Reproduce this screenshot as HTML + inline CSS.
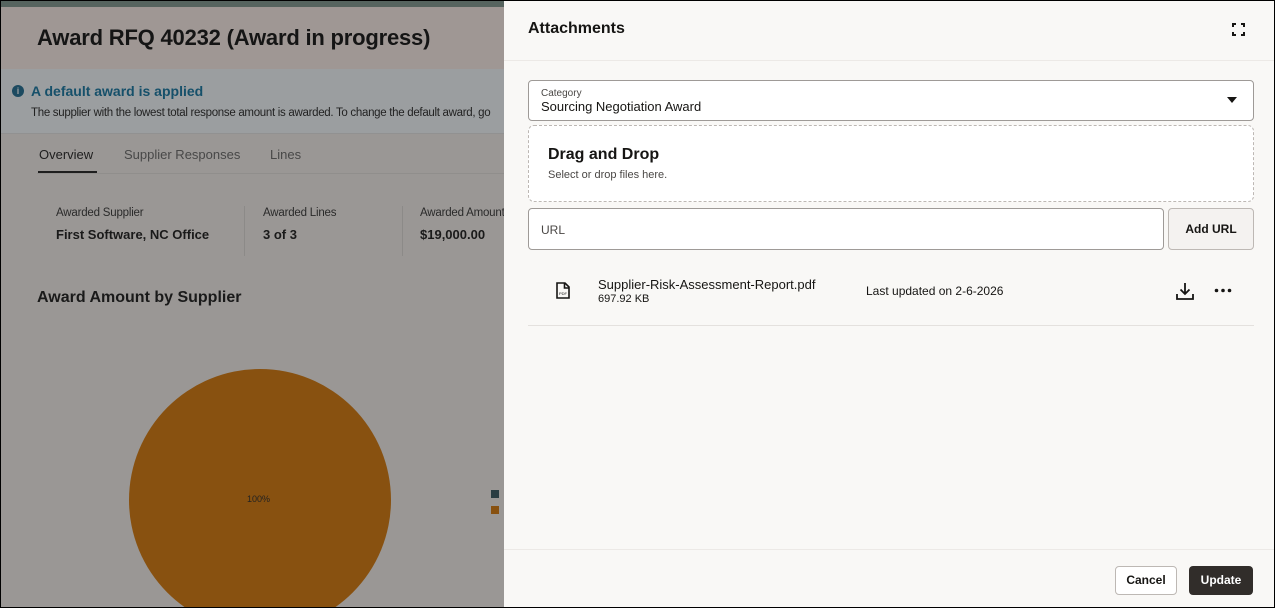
<!DOCTYPE html>
<html><head><meta charset="utf-8"><style>
*{box-sizing:border-box;margin:0;padding:0}
body{width:1275px;height:608px;overflow:hidden;font-family:"Liberation Sans",sans-serif;background:#000;position:relative}
.abs{position:absolute}
#left{left:1px;top:1px;width:503px;height:606px;background:#9a9795;overflow:hidden}
#panel{left:504px;top:1px;width:770px;height:606px;background:#f9f8f6}
.t{position:absolute;white-space:nowrap}
</style></head><body>
<div id="left" class="abs">
  <div class="abs" style="left:0;top:0;width:503px;height:6px;background:#56645f"></div>
  <div class="abs" style="left:0;top:6px;width:503px;height:62px;background:#9f9794"></div>
  <div class="t" style="left:36px;top:24px;font-size:22px;font-weight:bold;color:#151515;letter-spacing:-0.2px">Award RFQ 40232 (Award in progress)</div>
  <div class="abs" style="left:0;top:68px;width:503px;height:65px;background:#9b9ea0;border-bottom:1px solid #919191"></div>
  <div class="abs" style="left:11px;top:84px;width:12px;height:12px;border-radius:50%;background:#1c4a60;color:#9b9ea0;font-size:9px;font-weight:bold;text-align:center;line-height:12px">i</div>
  <div class="t" style="left:30px;top:82px;font-size:14px;font-weight:bold;color:#16506a">A default award is applied</div>
  <div class="t" style="left:30px;top:106px;font-size:11.5px;color:#222;letter-spacing:-0.3px">The supplier with the lowest total response amount is awarded. To change the default award, go</div>
  <div class="t" style="left:38px;top:146px;font-size:13px;color:#1e1e1e">Overview</div>
  <div class="abs" style="left:37px;top:170px;width:59px;height:2px;background:#1e1e1e"></div>
  <div class="t" style="left:123px;top:146px;font-size:13px;color:#484848">Supplier Responses</div>
  <div class="t" style="left:269px;top:146px;font-size:13px;color:#484848">Lines</div>
  <div class="abs" style="left:36px;top:172px;width:467px;height:1px;background:#908e8c"></div>
  <div class="t" style="left:55px;top:206px;font-size:11.5px;color:#2a2a2a;letter-spacing:-0.2px">Awarded Supplier</div>
  <div class="t" style="left:55px;top:226px;font-size:13px;font-weight:bold;color:#1a1a1a">First Software, NC Office</div>
  <div class="abs" style="left:243px;top:205px;width:1px;height:50px;background:#8c8a88"></div>
  <div class="t" style="left:262px;top:206px;font-size:11.5px;color:#2a2a2a;letter-spacing:-0.2px">Awarded Lines</div>
  <div class="t" style="left:262px;top:226px;font-size:13px;font-weight:bold;color:#1a1a1a">3 of 3</div>
  <div class="abs" style="left:401px;top:205px;width:1px;height:50px;background:#8c8a88"></div>
  <div class="t" style="left:419px;top:206px;font-size:11.5px;color:#2a2a2a;letter-spacing:-0.2px">Awarded Amount</div>
  <div class="t" style="left:419px;top:226px;font-size:13px;font-weight:bold;color:#1a1a1a">$19,000.00</div>
  <div class="t" style="left:36px;top:288px;font-size:16px;font-weight:bold;color:#1a1a1a">Award Amount by Supplier</div>
  <div class="abs" style="left:128px;top:368px;width:262px;height:262px;border-radius:50%;background:#885110"></div>
  <div class="t" style="left:246px;top:493px;font-size:9px;color:#222">100%</div>
  <div class="abs" style="left:490px;top:489px;width:8px;height:8px;background:#2a3d42"></div>
  <div class="abs" style="left:490px;top:505px;width:8px;height:8px;background:#885110"></div>
</div>
<div id="panel" class="abs">
  <div class="t" style="left:24px;top:19px;font-size:16px;font-weight:bold;color:#161513">Attachments</div>
  <svg class="abs" style="left:728px;top:22px" width="13" height="13" viewBox="0 0 13 13" fill="none" stroke="#161513" stroke-width="2"><path d="M1 4V1h3M9 1h3v3M12 9v3H9M4 12H1V9"/></svg>
  <div class="abs" style="left:0;top:59px;width:770px;height:1px;background:#ece9e6"></div>
  <div class="abs" style="left:24px;top:79px;width:726px;height:41px;border:1px solid #9e9a97;border-radius:4px;background:#fff"></div>
  <div class="t" style="left:37px;top:87px;font-size:10px;color:#4a4745">Category</div>
  <div class="t" style="left:37px;top:98px;font-size:13px;color:#161513">Sourcing Negotiation Award</div>
  <svg class="abs" style="left:723px;top:96px" width="10" height="6"><path d="M0 0h10L5 6z" fill="#161513"/></svg>
  <div class="abs" style="left:24px;top:124px;width:726px;height:77px;border:1px dashed #bdb8b4;border-radius:6px;background:#fff"></div>
  <div class="t" style="left:44px;top:145px;font-size:16px;font-weight:bold;color:#161513">Drag and Drop</div>
  <div class="t" style="left:44px;top:168px;font-size:11px;color:#4a4745">Select or drop files here.</div>
  <div class="abs" style="left:24px;top:207px;width:636px;height:42px;border:1px solid #9e9a97;border-radius:4px;background:#fff"></div>
  <div class="t" style="left:37px;top:222px;font-size:12px;color:#4a4745">URL</div>
  <div class="abs" style="left:664px;top:207px;width:86px;height:42px;border:1px solid #bdb8b4;border-radius:4px;background:#f4f2f0;font-size:12px;font-weight:bold;color:#161513;text-align:center;line-height:40px">Add URL</div>
  <svg class="abs" style="left:52px;top:281px" width="14" height="17" viewBox="0 0 14 17" fill="none" stroke="#161513" stroke-width="1.6"><path d="M1 1h8l4 4v11H1z"/><path d="M8.5 1v5h4.5"/><text x="3" y="13" font-size="4" fill="#161513" stroke="none" font-family="Liberation Sans">PDF</text></svg>
  <div class="t" style="left:94px;top:276px;font-size:13px;color:#161513">Supplier-Risk-Assessment-Report.pdf</div>
  <div class="t" style="left:94px;top:292px;font-size:11px;color:#161513">697.92 KB</div>
  <div class="t" style="left:362px;top:283px;font-size:12px;color:#161513">Last updated on 2-6-2026</div>
  <svg class="abs" style="left:672px;top:281px" width="18" height="18" viewBox="0 0 18 18" fill="none" stroke="#161513" stroke-width="1.8"><path d="M9 1v11M4.5 7.5L9 12l4.5-4.5M1 12v5h16v-5"/></svg>
  <svg class="abs" style="left:710px;top:287px" width="18" height="5" viewBox="0 0 18 5" fill="#161513"><circle cx="2.5" cy="2.5" r="1.8"/><circle cx="9" cy="2.5" r="1.8"/><circle cx="15.5" cy="2.5" r="1.8"/></svg>
  <div class="abs" style="left:24px;top:324px;width:726px;height:1px;background:#e4e1de"></div>
  <div class="abs" style="left:0;top:548px;width:770px;height:1px;background:#ece9e6"></div>
  <div class="abs" style="left:611px;top:565px;width:62px;height:29px;border:1px solid #bdb8b4;border-radius:4px;background:#fff;font-size:12px;font-weight:bold;color:#161513;text-align:center;line-height:27px">Cancel</div>
  <div class="abs" style="left:685px;top:565px;width:64px;height:29px;border-radius:4px;background:#312d2a;font-size:12px;font-weight:bold;color:#fff;text-align:center;line-height:29px">Update</div>
</div>
</body></html>
